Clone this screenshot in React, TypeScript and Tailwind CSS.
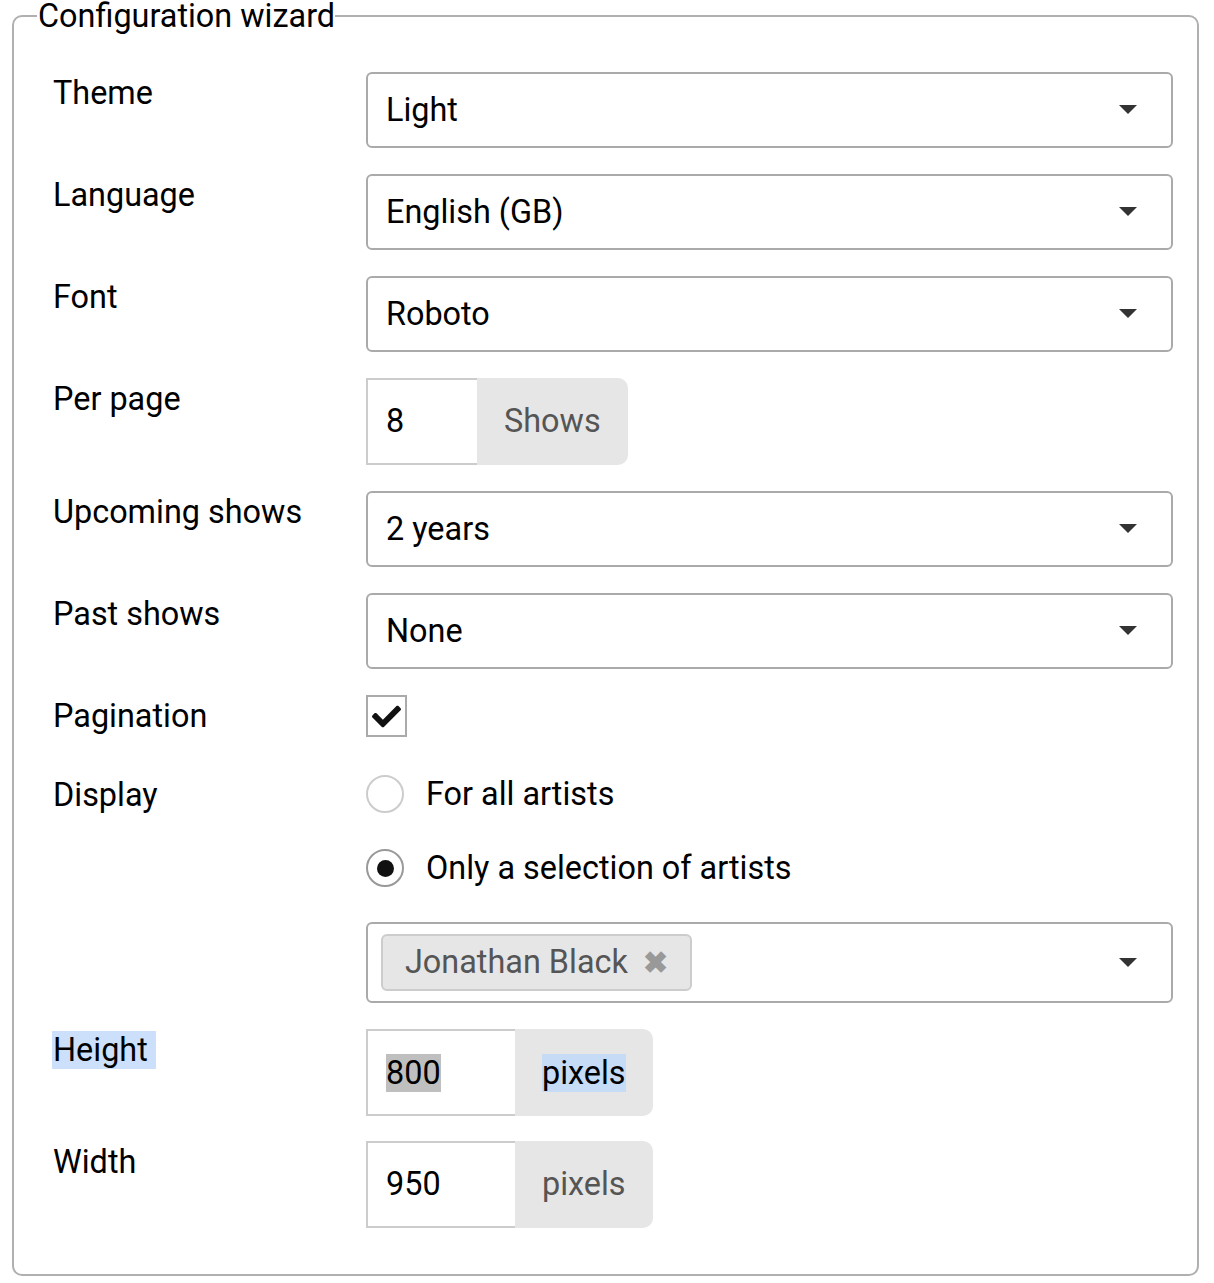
import { useState } from 'react'
import { FaCheck } from 'react-icons/fa'

const font = { fontFamily: 'Roboto, "Noto Sans", Arial, sans-serif' }

function Caret() {
  return (
    <svg width="18" height="10" viewBox="0 0 18 10" className="shrink-0">
      <path d="M0 0 L18 0 L9 9 Z" fill="#333" />
    </svg>
  )
}

function Select({ value }: { value: string }) {
  return (
    <div className="h-[76px] border-2 border-[#aaa] rounded-[6px] flex items-center pl-[18px] pr-[34px] justify-between">
      <span>{value}</span>
      <Caret />
    </div>
  )
}

function InputGroup({ value, unit, inputW, selected }: { value: string; unit: string; inputW: string; selected?: boolean }) {
  return (
    <div className="flex h-[87px]">
      <div className={`${inputW} border-2 border-r-0 border-[#ccc] flex items-center pl-[18px]`}>
        <span className={selected ? 'bg-[#bfbfbf] leading-[38px]' : ''}>{value}</span>
      </div>
      <div className="bg-[#e6e6e6] rounded-r-[10px] flex items-center px-[27px]">
        <span className={selected ? 'bg-[#c6dcf6] leading-[38px] text-black' : 'text-[#555]'}>{unit}</span>
      </div>
    </div>
  )
}

function Row({ label, children, className = '', selected }: { label: string; children: React.ReactNode; className?: string; selected?: boolean }) {
  return (
    <div className={`grid grid-cols-[313px_1fr] ${className}`}>
      <div className="leading-[38px] pt-[2px]">
        <span className={selected ? 'bg-[#cce0fc] inline-block pr-[8px] -ml-[1px] pl-[1px]' : ''}>{label}</span>
      </div>
      <div>{children}</div>
    </div>
  )
}

function Radio({ checked, label, onClick }: { checked: boolean; label: string; onClick: () => void }) {
  return (
    <div className="h-[40px] flex items-center cursor-pointer" onClick={onClick}>
      <div className={`w-[38px] h-[38px] rounded-full border-2 ${checked ? 'border-[#999]' : 'border-[#ccc]'} flex items-center justify-center`}>
        {checked && <div className="w-[17px] h-[17px] rounded-full bg-[#111]" />}
      </div>
      <span className="ml-[22px]">{label}</span>
    </div>
  )
}

export default function App() {
  const [display, setDisplay] = useState('selection')
  const [paginate, setPaginate] = useState(true)

  return (
    <div className="bg-white w-[1214px] h-[1283px] text-black text-[32.4px]" style={font}>
      <fieldset className="ml-[12px] mr-[15px] border-2 border-[#b0b0b0] rounded-[10px] pl-[22px] pr-[24px] pb-[45px] h-[1276px]">
        <legend className="leading-[32px] pl-[1px] ml-[1px] pr-0">Configuration wizard</legend>
        <div className="pl-[17px] pt-[40px] flex flex-col gap-[26px]">
          <Row label="Theme"><Select value="Light" /></Row>
          <Row label="Language"><Select value="English (GB)" /></Row>
          <Row label="Font"><Select value="Roboto" /></Row>
          <Row label="Per page"><InputGroup value="8" unit="Shows" inputW="w-[111px]" /></Row>
          <Row label="Upcoming shows"><Select value="2 years" /></Row>
          <Row label="Past shows"><Select value="None" /></Row>
          <Row label="Pagination">
            <div
              className="w-[41px] h-[42px] border-2 border-[#aaa] flex items-center justify-center cursor-pointer"
              onClick={() => setPaginate(!paginate)}
            >
              {paginate && <FaCheck size={29} color="#111" />}
            </div>
          </Row>
          <Row label="Display" className="mt-[11px]">
            <div className="flex flex-col gap-[34px]">
              <Radio checked={display === 'all'} label="For all artists" onClick={() => setDisplay('all')} />
              <Radio checked={display === 'selection'} label="Only a selection of artists" onClick={() => setDisplay('selection')} />
              <div className="h-[81px] border-2 border-[#aaa] rounded-[6px] flex items-center pl-[13px] pr-[34px] justify-between">
                <div className="h-[57px] bg-[#e6e6e6] border-2 border-[#ccc] rounded-[6px] flex items-center pl-[22px] pr-[22px] text-[#555]">
                  <span>Jonathan Black</span>
                  <span className="ml-[15px] text-[#999] font-bold text-[30px]">✖</span>
                </div>
                <Caret />
              </div>
            </div>
          </Row>
          <Row label="Height" selected><InputGroup value="800" unit="pixels" inputW="w-[149px]" selected /></Row>
          <Row label="Width" className="-mt-[1px]"><InputGroup value="950" unit="pixels" inputW="w-[149px]" /></Row>
        </div>
      </fieldset>
    </div>
  )
}
